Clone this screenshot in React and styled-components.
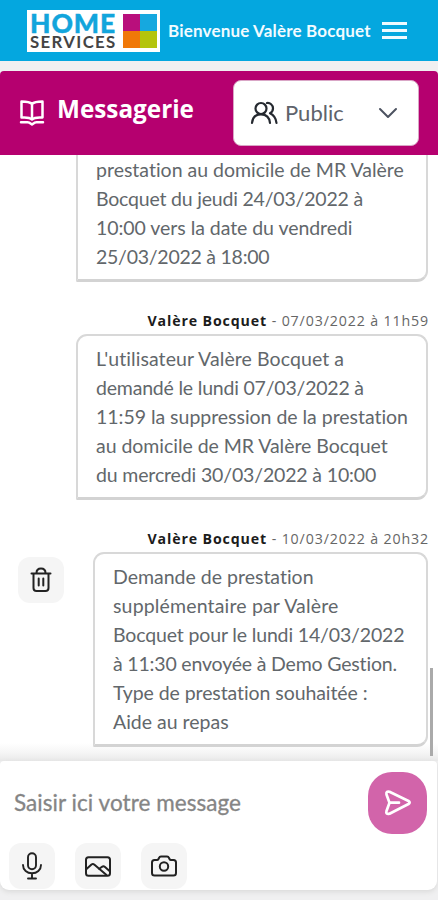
import React from "react";
import styled, { createGlobalStyle } from "styled-components";

const Global = createGlobalStyle`
  * { box-sizing: border-box; }
  body { margin: 0; background: #fff; font-family: Lato, sans-serif; }
  button { border: 0; padding: 0; font: inherit; }
  svg { display: block; flex: none; }
`;

const Screen = styled.div`
  width: 438px;
  height: 900px;
  display: flex;
  flex-direction: column;
  overflow: hidden;
  background: #f0f0f1;
`;

const TopBar = styled.header`
  height: 61px;
  flex: none;
  display: flex;
  align-items: center;
  padding: 0 31px 0 27px;
  background: #04a7df;
`;

const Logo = styled.div`
  width: 133px;
  height: 42px;
  display: flex;
  justify-content: space-between;
  padding: 3px 3px 0 3px;
  background: #fff;
`;

const LogoWords = styled.div`
  width: 88px;
  display: flex;
  flex-direction: column;
`;

const LogoHome = styled.span`
  height: 20px;
  font: 900 26.5px/21px Lato, sans-serif;
  letter-spacing: 0.9px;
  -webkit-text-stroke: 0.4px #12a5dc;
  color: #12a5dc;
`;

const LogoServices = styled.span`
  height: 16px;
  font: 700 16.8px/17px Lato, sans-serif;
  letter-spacing: 1.35px;
  color: #444;
`;

const LogoTiles = styled.div`
  width: 34px;
  height: 34px;
  margin-top: 1px;
  display: grid;
  grid-template-columns: 1fr 1fr;
`;

const Tile = styled.i`
  background: ${(p) => p.$color};
`;

const Welcome = styled.span`
  margin-left: 8px;
  width: 204px;
  font-size: 17px;
  font-weight: 700;
  line-height: 22px;
  letter-spacing: 0.17px;
  white-space: nowrap;
  color: #f2fbff;
`;

const Burger = styled.button`
  width: 25px;
  height: 17px;
  margin-left: auto;
  display: flex;
  flex-direction: column;
  justify-content: space-between;
  background: none;
`;

const BurgerBar = styled.span`
  width: 25px;
  height: 3px;
  background: #eefaff;
`;

const TitleBar = styled.div`
  height: 84px;
  flex: none;
  display: flex;
  align-items: center;
  margin-top: 10px;
  padding: 0 19px;
  border-radius: 4px 4px 0 0;
  background: #b5006f;
  color: #fff;
`;

const Title = styled.h1`
  margin: -9px 0 0 12px;
  font: 700 24.3px/32px "Open Sans", sans-serif;
  white-space: nowrap;
`;

const Select = styled.button`
  width: 186px;
  height: 66px;
  margin-left: auto;
  display: flex;
  align-items: center;
  padding: 0 20px 0 16px;
  border: 1px solid #d9a6c6;
  border-radius: 8px;
  background: #fff;
  color: #4c5260;
`;

const SelectLabel = styled.span`
  margin: -2px 0 0 7px;
  flex: 1;
  text-align: left;
  font-size: 22px;
  color: #5e636b;
`;

const Thread = styled.main`
  height: 606px;
  flex: none;
  display: flex;
  overflow: hidden;
  background: linear-gradient(#fff 0 588px, #f6f6f6 597px, #e9e9e9 606px);
`;

const Messages = styled.div`
  flex: 1;
  display: flex;
  flex-direction: column;
  justify-content: flex-end;
  padding: 0 0 14px 18px;
`;

const Message = styled.article`
  flex: none;
  display: flex;
  flex-direction: column;
  margin-top: 26px;
`;

const Meta = styled.div`
  height: 26px;
  text-align: right;
  font: 400 14.2px/26px "Open Sans", sans-serif;
  letter-spacing: 0.87px;
  margin-right: -1px;
  white-space: nowrap;
  color: #666;
  b { color: #1c1c1c; }
`;

const MessageRow = styled.div`
  display: flex;
  justify-content: space-between;
`;

const Bubble = styled.div`
  width: ${(p) => (p.$narrow ? 335 : 352)}px;
  margin-left: auto;
  padding: 8px 0 7.5px 18px;
  border: 2px solid #d8d8d8;
  border-bottom: 3px solid #d3d3d3;
  border-radius: 11px 11px 11px 1px;
  background: #fff;
`;

const Line = styled.div`
  height: 29.1px;
  font-size: 19.5px;
  line-height: 29.1px;
  font-variant-ligatures: none;
  letter-spacing: ${(p) => p.$track || 0}px;
  white-space: nowrap;
  color: #62676b;
`;

const IconButton = styled.button`
  width: 46px;
  height: 46px;
  margin-top: ${(p) => p.$top || 0}px;
  display: grid;
  place-items: center;
  border-radius: 12px;
  background: #f5f5f5;
  color: #222;
`;

const Gutter = styled.div`
  width: 10px;
  flex: none;
  display: flex;
  align-items: flex-end;
  padding: 0 0 5px 2px;
`;

const Thumb = styled.div`
  width: 3px;
  height: 88px;
  background: #aaa;
`;

const Composer = styled.footer`
  height: 129px;
  flex: none;
  display: flex;
  flex-direction: column;
  margin-right: 1px;
  padding: 10px 10px 0 9px;
  border-radius: 4px 4px 9px 9px;
  background: #fff;
  box-shadow: 0 2px 5px #dadada;
`;

const InputRow = styled.div`
  height: 72px;
  display: flex;
  align-items: center;
  justify-content: space-between;
`;

const Placeholder = styled.span`
  padding: 0 0 9px 5px;
  font-size: 22.5px;
  letter-spacing: 0.05px;
  color: #858585;
  -webkit-text-stroke: 0.3px #858585;
`;

const Send = styled.button`
  width: 59px;
  height: 62px;
  margin-bottom: 9px;
  display: grid;
  place-items: center;
  border-radius: 24px;
  background: #d264aa;
  color: #fff;
`;

const Tools = styled.div`
  display: flex;
  gap: 20px;
`;

function Icon({ width = 24, height = 24, stroke = 1.8, view = "0 0 24 24", children }) {
  return (
    <svg width={width} height={height} viewBox={view} fill="none" stroke="currentColor"
      strokeWidth={stroke} strokeLinecap="round" strokeLinejoin="round">
      {children}
    </svg>
  );
}

const BookIcon = () => (
  <Icon width={26} height={28} view="0 0 26 28" stroke={2.5}>
    <path d="M13 5C11 3 9 2.500 2.500 2.500V18.500C9 18 11 18.500 13 20.500C15 18.500 17 18 23.500 18.500V2.500C17 2.500 15 3 13 5V20.500M2 23.200H8.500Q10.500 23.200 11.500 24.500L13 25.500L14.500 24.500Q15.500 23.200 17.500 23.200H24" />
  </Icon>
);

const PeopleIcon = () => (
  <Icon width={28} height={24} view="0 0 28 24" stroke={2.2}>
    <g stroke="#252930">
      <circle cx="11" cy="7.500" r="5.500" />
      <path d="M2 22C2.500 16.500 6 13.300 11 13.300S19.500 16.500 20 22M17 2C20 1.500 23 4 23 7.200C23 9.500 21.800 11.300 20 12.200C23.500 13.800 26 17 26.500 22" />
    </g>
  </Icon>
);

const ChevronIcon = () => (
  <Icon width={20} height={12} view="0 0 20 12" stroke={2}>
    <path d="M2 2L10 10L18 2" />
  </Icon>
);

const TrashIcon = () => (
  <Icon width={22} height={26} view="0 0 22 26" stroke={2}>
    <path d="M1.500 6.500H20.500M3.500 6.500V21Q3.500 24 6.500 24H15.500Q18.500 24 18.500 21V6.500M6.500 6C6.500 3 8 1.500 11 1.500S15.500 3 15.500 6M8.700 11.500V18.500M13.300 11.500V18.500" />
  </Icon>
);

const MicIcon = () => (
  <Icon width={20} height={28} view="0 0 20 28" stroke={1.9}>
    <rect x="6" y="1.200" width="8" height="16" rx="4" />
    <path d="M1 13C1 18 5 21.300 10 21.300S19 18 19 13M10 21.300V26.500M6 26.500H14" />
  </Icon>
);

const ImageIcon = () => (
  <Icon width={26} height={21} view="0 0 26 21" stroke={2}>
    <rect x="1" y="1.200" width="24" height="18.500" rx="2.500" />
    <path d="M1.500 13L6.500 8.500Q8 7.500 9.500 8.700L21.500 19M14 13L17 10.800Q18.500 9.800 20 11L24.500 15" />
  </Icon>
);

const CameraIcon = () => (
  <Icon width={26} height={22} view="0 0 26 22" stroke={2}>
    <path d="M3.500 5H6Q7 5 7.500 4L8 3Q8.500 1.500 10 1.500H16Q17.500 1.500 18 3L18.500 4Q19 5 20 5H22.500Q25 5 25 7.500V18Q25 20.500 22.500 20.500H3.500Q1 20.500 1 18V7.500Q1 5 3.500 5Z" />
    <circle cx="13" cy="11.500" r="4.200" />
  </Icon>
);

const SendIcon = () => (
  <Icon width={28} height={28} view="0 0 28 28" stroke={2.7}>
    <path d="M5.500 2.800L24.500 12Q26.800 13.500 24.500 15L5.500 24.700Q1.500 25.500 2.500 22L5.500 13.700L2.500 5.500Q1.800 2 5.500 2.800ZM5.500 13.700H15" />
  </Icon>
);

const messages = [
  {
    id: 1,
    lines: [
      ["prestation au domicile de MR Valère", 0],
      ["Bocquet du jeudi 24/03/2022 à", -0.2],
      ["10:00 vers la date du vendredi", -0.05],
      ["25/03/2022 à 18:00", -0.25],
    ],
  },
  {
    id: 2,
    date: "07/03/2022 à 11h59",
    lines: [
      ["L'utilisateur Valère Bocquet a", 0.08],
      ["demandé le lundi 07/03/2022 à", -0.2],
      ["11:59 la suppression de la prestation", -0.03],
      ["au domicile de MR Valère Bocquet", -0.04],
      ["du mercredi 30/03/2022 à 10:00", -0.15],
    ],
  },
  {
    id: 3,
    date: "10/03/2022 à 20h32",
    removable: true,
    lines: [
      ["Demande de prestation", 0],
      ["supplémentaire par Valère", 0.16],
      ["Bocquet pour le lundi 14/03/2022", -0.15],
      ["à 11:30 envoyée à Demo Gestion.", -0.18],
      ["Type de prestation souhaitée :", -0.08],
      ["Aide au repas", 0],
    ],
  },
];

const tiles = ["#b90f7c", "#16a8df", "#f07808", "#b4c40c"];

export default function App() {
  return (
    <Screen>
      <Global />
      <TopBar>
        <Logo>
          <LogoWords>
            <LogoHome>HOME</LogoHome>
            <LogoServices>SERVICES</LogoServices>
          </LogoWords>
          <LogoTiles>{tiles.map((c) => <Tile key={c} $color={c} />)}</LogoTiles>
        </Logo>
        <Welcome>Bienvenue Valère Bocquet</Welcome>
        <Burger aria-label="Menu"><BurgerBar /><BurgerBar /><BurgerBar /></Burger>
      </TopBar>
      <TitleBar>
        <BookIcon />
        <Title>Messagerie</Title>
        <Select>
          <PeopleIcon />
          <SelectLabel>Public</SelectLabel>
          <ChevronIcon />
        </Select>
      </TitleBar>
      <Thread>
        <Messages>
          {messages.map((m) => (
            <Message key={m.id}>
              {m.date && <Meta><b>Valère Bocquet</b> - {m.date}</Meta>}
              <MessageRow>
                {m.removable && <IconButton $top={5} aria-label="Supprimer"><TrashIcon /></IconButton>}
                <Bubble $narrow={m.removable}>
                  {m.lines.map(([text, track]) => <Line key={text} $track={track}>{text}</Line>)}
                </Bubble>
              </MessageRow>
            </Message>
          ))}
        </Messages>
        <Gutter><Thumb /></Gutter>
      </Thread>
      <Composer>
        <InputRow>
          <Placeholder>Saisir ici votre message</Placeholder>
          <Send aria-label="Envoyer"><SendIcon /></Send>
        </InputRow>
        <Tools>
          <IconButton aria-label="Micro"><MicIcon /></IconButton>
          <IconButton aria-label="Image"><ImageIcon /></IconButton>
          <IconButton aria-label="Photo"><CameraIcon /></IconButton>
        </Tools>
      </Composer>
    </Screen>
  );
}
